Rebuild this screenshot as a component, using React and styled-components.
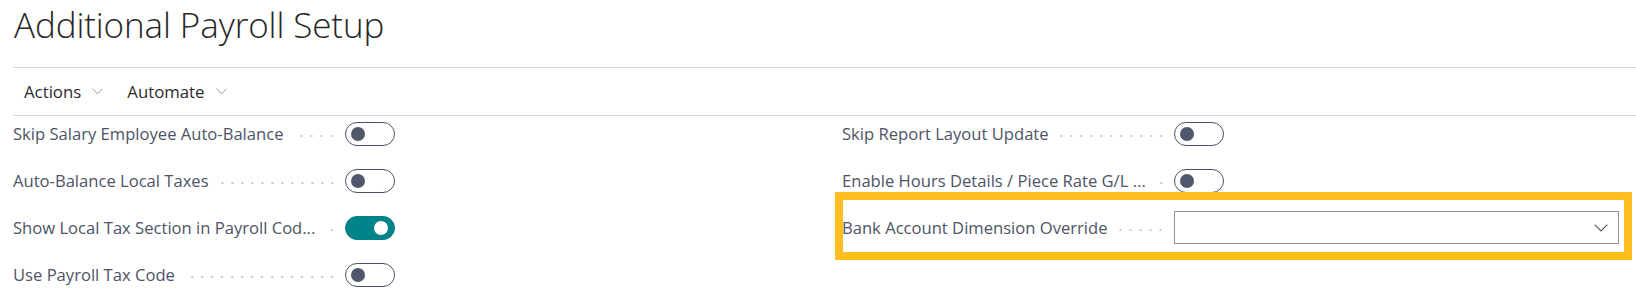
import React from 'react';
import styled, { createGlobalStyle } from 'styled-components';

const GlobalStyle = createGlobalStyle`
  html, body {
    margin: 0;
    padding: 0;
    background: #ffffff;
  }
  body {
    font-family: "Open Sans", "Noto Sans", "Liberation Sans", sans-serif;
    -webkit-font-smoothing: antialiased;
  }
`;

const Page = styled.div`
  width: 1636px;
  height: 294px;
  overflow: hidden;
  background: #ffffff;
`;

const Header = styled.header`
  margin-left: 13px;
  height: 68px;
  box-sizing: border-box;
  border-bottom: 1px solid #d6d6d6;
`;

const Title = styled.h1`
  margin: 0;
  padding: 5px 0 0 1px;
  font-size: 35px;
  font-weight: 300;
  color: #262626;
  letter-spacing: -0.1px;
  line-height: 40px;
`;

const ActionBar = styled.nav`
  margin-left: 13px;
  height: 48px;
  box-sizing: border-box;
  border-bottom: 1px solid #d6d6d6;
  display: flex;
  align-items: center;
  gap: 24px;
  padding-left: 11px;
`;

const ActionItem = styled.button`
  display: flex;
  align-items: center;
  gap: 11px;
  border: 0;
  background: none;
  padding: 0;
  font-family: inherit;
  font-size: 16.8px;
  font-weight: 400;
  color: #2b2b2b;
  cursor: pointer;
`;

const FieldGrid = styled.section`
  display: grid;
  grid-template-columns: 777px 777px;
  column-gap: 52px;
  padding: 1px 0 0 13px;
`;

const Column = styled.div`
  display: flex;
  flex-direction: column;
  gap: 14px;
`;

const Field = styled.div`
  position: relative;
  display: grid;
  grid-template-columns: 332px 1fr;
  align-items: center;
  height: 33px;

  ${p => p.$highlight && `
    &::after {
      content: '';
      position: absolute;
      left: -7px;
      right: -13px;
      top: -19px;
      bottom: -16px;
      border: 8px solid #fdbe1e;
      pointer-events: none;
    }
  `}
`;

const LabelCell = styled.div`
  display: flex;
  align-items: center;
  min-width: 0;
  padding-right: 8px;
  gap: 10px;
`;

const Label = styled.span`
  font-size: 16.6px;
  color: #4d5466;
  white-space: nowrap;
  flex: 0 0 auto;
`;

const Leader = styled.span`
  flex: 1 1 0;
  min-width: 8px;
  height: 4px;
  margin-top: 5px;
  background-image: radial-gradient(circle, #c9c9c9 1px, transparent 1.3px);
  background-size: 10px 4px;
  background-position: right center;
  background-repeat: repeat-x;
`;

const Toggle = styled.span`
  position: relative;
  display: block;
  width: 50px;
  height: 24px;
  box-sizing: border-box;
  border-radius: 12px;
  border: 1.5px solid ${p => (p.$on ? '#00848a' : '#4a5263')};
  background: ${p => (p.$on ? '#00848a' : '#ffffff')};

  &::after {
    content: '';
    position: absolute;
    top: 50%;
    width: 14px;
    height: 14px;
    margin-top: -7px;
    border-radius: 50%;
    background: ${p => (p.$on ? '#ffffff' : '#4f586b')};
    left: ${p => (p.$on ? '28px' : '5px')};
  }
`;

const Select = styled.div`
  height: 33px;
  box-sizing: border-box;
  border: 1px solid #8a929c;
  display: flex;
  align-items: center;
  justify-content: flex-end;
  padding-right: 10px;
`;

const Chevron = ({ size = 11, color = '#8a8a8a' }) => (
  <svg width={size} height={Math.round(size / 2) + 1} viewBox="0 0 12 7" fill="none">
    <path d="M0.5 0.5 L6 6 L11.5 0.5" stroke={color} strokeWidth="1" />
  </svg>
);

const leftFields = [
  { label: 'Skip Salary Employee Auto-Balance', on: false },
  { label: 'Auto-Balance Local Taxes', on: false },
  { label: 'Show Local Tax Section in Payroll Cod...', on: true },
  { label: 'Use Payroll Tax Code', on: false },
];

const rightFields = [
  { label: 'Skip Report Layout Update', on: false },
  { label: 'Enable Hours Details / Piece Rate G/L ...', on: false },
];

function FieldRow({ label, children, highlight }) {
  return (
    <Field $highlight={highlight}>
      <LabelCell>
        <Label>{label}</Label>
        <Leader />
      </LabelCell>
      {children}
    </Field>
  );
}

export default function App() {
  return (
    <Page>
      <GlobalStyle />
      <Header>
        <Title>Additional Payroll Setup</Title>
      </Header>
      <ActionBar>
        <ActionItem>Actions <Chevron /></ActionItem>
        <ActionItem>Automate <Chevron /></ActionItem>
      </ActionBar>
      <FieldGrid>
        <Column>
          {leftFields.map(f => (
            <FieldRow key={f.label} label={f.label}>
              <Toggle $on={f.on} />
            </FieldRow>
          ))}
        </Column>
        <Column>
          {rightFields.map(f => (
            <FieldRow key={f.label} label={f.label}>
              <Toggle $on={f.on} />
            </FieldRow>
          ))}
          <FieldRow label="Bank Account Dimension Override" highlight>
            <Select>
              <Chevron size={14} color="#505a6b" />
            </Select>
          </FieldRow>
        </Column>
      </FieldGrid>
    </Page>
  );
}
